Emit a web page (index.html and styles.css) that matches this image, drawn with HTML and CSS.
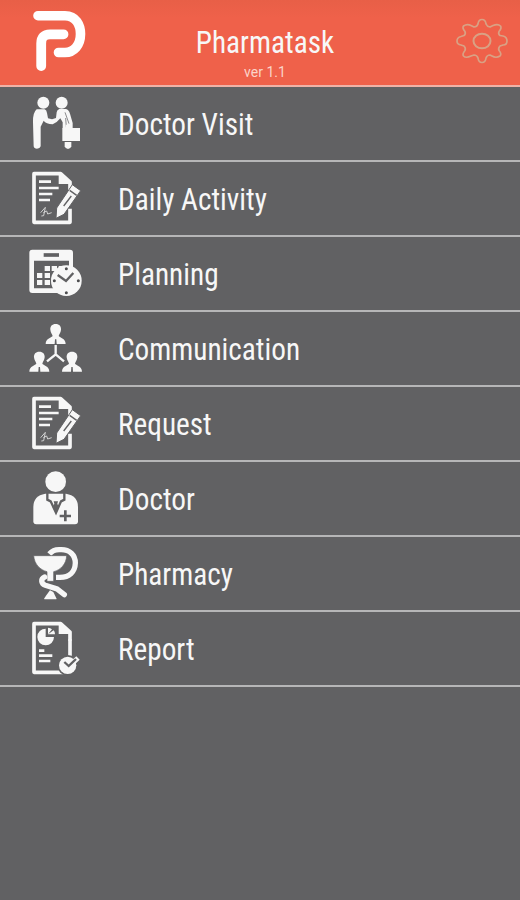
FILE: index.html
```html
<!DOCTYPE html>
<html lang="en">
<head>
<meta charset="utf-8">
<title>Pharmatask</title>
<link rel="stylesheet" href="styles.css">
</head>
<body>
<svg class="defs" width="0" height="0">
  <symbol id="document" viewBox="0 6 180 219">
    <path d="M150 92V66L122 41H42V187H150V146" fill="none" stroke="#f7f7f7" stroke-width="11" stroke-linejoin="round"/>
    <path d="M116 38V72H154Z" fill="#f7f7f7"/>
  </symbol>
  <symbol id="note" viewBox="0 6 180 219">
    <use href="#document" x="0" y="6" width="180" height="219"/>
    <path d="M57 65H93M57 84H116M57 102H97M57 120H90" stroke="#f7f7f7" stroke-width="8"/>
    <path d="M62 158L76 142L71 167L64 168M70 158L80 153L83 162L95 158" fill="none" stroke="#d2d2d2" stroke-width="3"/>
    <path d="M157 74L182 92L132 163L108 175L110 144Z" fill="#f7f7f7" stroke="#616163" stroke-width="3"/>
    <path d="M149 91L170 106M131 138L154 108" stroke="#616163" stroke-width="4"/>
  </symbol>
  <symbol id="person" viewBox="0 0 60 62">
    <path d="M30 1C41 1 47 8 46 18C45 27 41 30 39 37C41 42 60 43 60 61H33L32 47H28L27 61H0C0 43 19 42 21 37C19 30 15 27 14 18C13 8 19 1 30 1Z" fill="#f7f7f7"/>
  </symbol>
</svg>
<header class="header">
  <svg class="logo" viewBox="0 0 60 70" fill="none" stroke="#fff" stroke-linecap="round" stroke-linejoin="round">
    <path d="M10 15.700H37C48 15.700 52.500 25 52.500 34C52.500 45 46 52.500 37 52.500H30.500" stroke-width="9.600"/>
    <path d="M13.200 66V43.500Q13.200 34.300 22 34.300H35.500" stroke-width="9.800"/>
  </svg>
  <div class="heading">
    <h1 class="title">Pharmatask</h1>
    <p class="version">ver 1.1</p>
  </div>
  <svg class="gear" viewBox="0 0 56 48" fill="none" stroke="#d9a184" stroke-width="1.700" stroke-linejoin="round">
    <path d="M24 7Q24.500 2.500 28 2.500T32 7Q33 9.500 36 10L39 8.500Q44 6.500 46.500 9Q48 11 45 14.500Q44 17 46 18.500L49 19Q53 20 53 24T49 28L46 29Q44 31 45 33.500Q48 37 46 39Q42 41.500 38 39L36 38Q33 38 32 41Q31.500 45.500 28 45.500T24 41Q23 38 20 38L17 39Q12 41.500 9.500 39Q8 37 11 33.500Q12 31 10 29L7 28Q3 27.500 3 24T7 19.500L10 18.500Q12 17 11 14.500Q8 11 9.500 9Q13 6.500 17 8.500L20 10Q23 10 24 7Z"/>
    <ellipse cx="28" cy="24" rx="8.500" ry="7.300" stroke-width="2"/>
  </svg>
</header>
<nav class="menu">
  <a class="item">
    <svg class="icon" viewBox="0 6 180 219" fill="#f7f7f7">
      <circle cx="70" cy="53" r="18"/><circle cx="125" cy="53" r="18"/>
      <path d="M50 73H74Q80 75 81 84L84 100L96 103L108 99L110 82Q111 75 118 72H138Q146 74 150 86L158 114V130H128V112L121 100Q113 111 98 118Q78 117 71 107L62 125V184Q60 191 51 191T41 184L39 112Q38 83 50 73Z"/>
      <path d="M135 82L147 116M137 99L139 127" fill="none" stroke="#8a8a8c" stroke-width="3"/>
      <rect x="127" y="129" width="53" height="39"/>
      <path d="M139 129V121H154V129" fill="none" stroke="#f7f7f7" stroke-width="4"/>
      <path d="M134 171H154V184Q152 192 144 192T134 184Z"/>
    </svg>
    <span class="label">Doctor Visit</span>
  </a>
  <a class="item"><svg class="icon"><use href="#note"/></svg><span class="label">Daily Activity</span></a>
  <a class="item">
    <svg class="icon" viewBox="0 6 180 219">
      <rect x="28" y="44" width="131" height="130" rx="9" fill="#f7f7f7"/>
      <path d="M42 77H147V160H42Z" fill="#616163"/>
      <path d="M71 60H117" stroke="#616163" stroke-width="11"/>
      <path d="M74 93H90V108H74ZM95 93H111V108H95ZM116 93H132V108H116ZM51 114H67V129H51ZM74 114H90V129H74ZM51 135H67V150H51ZM74 135H90V150H74Z" fill="#f7f7f7"/>
      <circle cx="139" cy="137" r="46" fill="#f7f7f7"/>
      <path d="M113 120L138 138L160 114" fill="none" stroke="#616163" stroke-width="7"/>
      <g fill="#4d4d4f"><circle cx="139" cy="101" r="4.500"/><circle cx="175" cy="137" r="4.500"/><circle cx="139" cy="173" r="4.500"/><circle cx="103" cy="137" r="4.500"/></g>
    </svg>
    <span class="label">Planning</span>
  </a>
  <a class="item">
    <svg class="icon" viewBox="0 6 180 219">
      <path d="M107 105V133L81 154M107 133L132 154" fill="none" stroke="#f7f7f7" stroke-width="7"/>
      <use href="#person" x="77" y="41" width="60" height="62"/>
      <use href="#person" x="28" y="124" width="60" height="62"/>
      <use href="#person" x="126" y="124" width="60" height="62"/>
    </svg>
    <span class="label">Communication</span>
  </a>
  <a class="item"><svg class="icon"><use href="#note"/></svg><span class="label">Request</span></a>
  <a class="item">
    <svg class="icon" viewBox="0 6 180 219">
      <circle cx="107" cy="65" r="31" fill="#f7f7f7"/>
      <path d="M76 101H138Q174 107 174 141V184Q174 193 165 193H49Q40 193 40 184V141Q40 107 76 101Z" fill="#f7f7f7"/>
      <path d="M82 98V119L92 124L108 158L123 124L133 119V98" fill="none" stroke="#616163" stroke-width="7"/>
      <path d="M101 124H114L112 131L117 143L108 158L98 143L103 131Z" fill="#616163"/>
      <path d="M136 151V184M119 168H153" stroke="#616163" stroke-width="8"/>
    </svg>
    <span class="label">Doctor</span>
  </a>
  <a class="item">
    <svg class="icon" viewBox="0 6 180 219">
      <path d="M88 57Q101 42 122 44C149 43 166 60 166 84C165 111 148 127 120 127H108" fill="none" stroke="#f7f7f7" stroke-width="16"/>
      <path d="M41 62H140C139 87 122 105 101 110V139H81V110C61 105 43 88 41 62Z" fill="#f7f7f7" stroke="#616163" stroke-width="2"/>
      <path d="M76 126C61 132 61 146 75 151L111 162L133 179" fill="none" stroke="#616163" stroke-width="21"/>
      <path d="M74 126C62 131 62 146 76 151L111 162L133 179" fill="none" stroke="#f7f7f7" stroke-width="16" stroke-linecap="round"/>
      <path d="M90 166L100 171L109 190V193H73V190L79 181Z" fill="#f7f7f7"/>
    </svg>
    <span class="label">Pharmacy</span>
  </a>
  <a class="item">
    <svg class="icon" viewBox="0 6 180 219">
      <use href="#document" x="0" y="6" width="180" height="219"/>
      <path d="M77 56V81H102A25 25 0 1 1 77 56Z" fill="#f7f7f7"/>
      <path d="M84 73V53Q91 53 96 58L84 73L101 61Q105 66 105 73Z" fill="#f7f7f7"/>
      <path d="M150 88V140" stroke="#f7f7f7" stroke-width="11"/>
      <path d="M57 122H73M57 137H97M57 153H91" stroke="#f7f7f7" stroke-width="8"/>
      <circle cx="143" cy="166" r="31" fill="#616163"/>
      <circle cx="143" cy="166" r="26" fill="#f7f7f7"/>
      <path d="M134 157L147 169L174 144" fill="none" stroke="#f7f7f7" stroke-width="15"/>
      <path d="M133 156L146 168L168 147" fill="none" stroke="#616163" stroke-width="7"/>
    </svg>
    <span class="label">Report</span>
  </a>
</nav>
</body>
</html>
```
FILE: styles.css
```css
* {
  box-sizing: border-box;
}

body {
  margin: 0;
  min-height: 900px;
  background: #616163;
  color: #f7f7f7;
  font-family: "Roboto Condensed", Roboto, sans-serif;
  font-stretch: 75%;
}

svg,
symbol {
  overflow: visible;
}

.defs {
  display: block;
}

.header {
  display: grid;
  grid-template-columns: 60px 1fr 56px;
  height: 87px;
  padding: 0 10px 0 28px;
  background: linear-gradient(#e85f47, #ef614a 18px);
  border-bottom: 2px solid #efb2a7;
}

.logo {
  width: 60px;
  height: 70px;
}

.heading {
  display: flex;
  flex-direction: column;
  align-items: center;
  padding: 25px 0 0 0;
  margin-left: -12px;
}

.title {
  margin: 0;
  font-size: 30px;
  font-weight: 400;
  line-height: 36px;
  transform: scale(0.975, 1.03);
}

.version {
  margin: 3px 0 0;
  font-family: Roboto, sans-serif;
  font-size: 14px;
  font-stretch: 100%;
  line-height: 16px;
  color: #fbd3c9;
}

.gear {
  width: 56px;
  height: 48px;
  margin-top: 17px;
}

.item {
  display: flex;
  align-items: center;
  gap: 38px;
  height: 75px;
  padding-left: 20px;
  border-bottom: 2px solid #b6b6b7;
}

.icon {
  flex: none;
  width: 60px;
  height: 73px;
}

.label {
  padding-top: 3px;
  font-size: 30px;
  line-height: 36px;
  transform: scale(0.975, 1.03);
  transform-origin: left center;
}
```
